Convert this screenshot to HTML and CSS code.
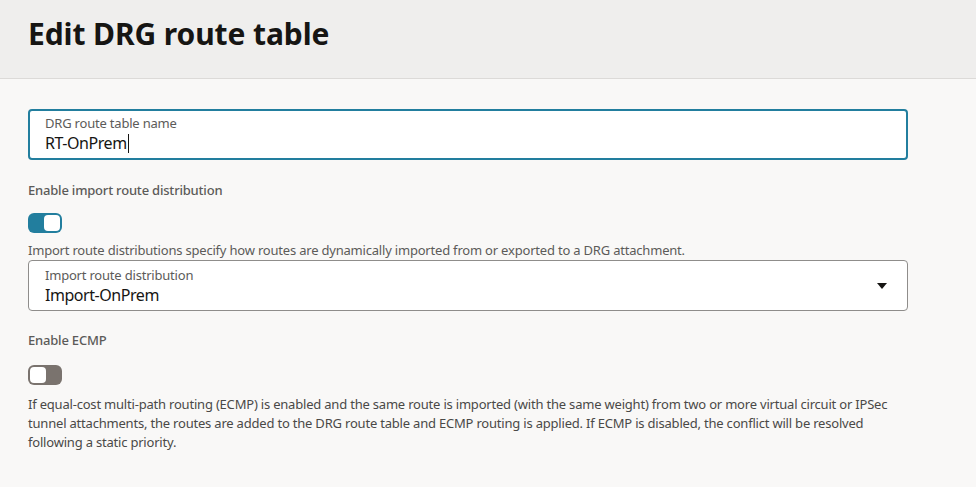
FILE: index.html
```html
<!DOCTYPE html>
<html>
<head>
<meta charset="utf-8">
<link rel="stylesheet" href="styles.css">
</head>
<body>
<header class="header">
  <h1 class="title">Edit DRG route table</h1>
</header>
<main class="content">
  <div class="field field-focus">
    <div class="field-label">DRG route table name</div>
    <div class="field-value">RT-OnPrem<span class="caret-line"></span></div>
  </div>

  <div class="section-label sl-import">Enable import route distribution</div>
  <div class="toggle toggle-on"><span class="knob"></span></div>
  <div class="help">Import route distributions specify how routes are dynamically imported from or exported to a DRG attachment.</div>

  <div class="field field-select">
    <div class="select-text">
      <div class="field-label">Import route distribution</div>
      <div class="field-value">Import-OnPrem</div>
    </div>
    <svg class="dropdown" width="10" height="6" viewBox="0 0 10 6"><path d="M0 0 H10 L5 6 Z" fill="#161513"/></svg>
  </div>

  <div class="section-label sl-ecmp">Enable ECMP</div>
  <div class="toggle toggle-off"><span class="knob"></span></div>
  <p class="desc">If equal-cost multi-path routing (ECMP) is enabled and the same route is imported (with the same weight) from two or more virtual circuit or IPSec tunnel attachments, the routes are added to the DRG route table and ECMP routing is applied. If ECMP is disabled, the conflict will be resolved following a static priority.</p>
</main>
</body>
</html>
```
FILE: styles.css
```css
* { box-sizing: border-box; }
html, body { margin: 0; padding: 0; }
body {
  background: #f9f8f7;
  font-family: "Noto Sans", "Open Sans", sans-serif;
  color: #161513;
  width: 976px;
  height: 487px;
  overflow: hidden;
}
.header {
  height: 79px;
  background: #efeeed;
  border-bottom: 1px solid #dcdad8;
  padding: 13px 0 0 28px;
}
.title {
  margin: 0;
  font-size: 30px;
  font-weight: 700;
  line-height: 42px;
  letter-spacing: -0.1px;
  color: #161513;
}
.content {
  padding: 30px 0 0 28px;
  width: 908px;
}
.field {
  height: 51px;
  background: #fff;
  border-radius: 4px;
  padding: 6px 0 0 16px;
}
.field-focus {
  border: 2px solid #227e9e;
  padding: 3px 0 0 15px;
}
.field-label {
  font-size: 13px;
  line-height: 18px;
  letter-spacing: -0.2px;
  color: #5c5b59;
}
.field-value {
  font-size: 16px;
  line-height: 22px;
  letter-spacing: -0.45px;
  color: #161513;
  display: flex;
  align-items: center;
}
.caret-line {
  display: inline-block;
  width: 1px;
  height: 19px;
  background: #161513;
  margin-left: 1px;
}
.field-select {
  border: 1px solid #8f8d8b;
  display: flex;
  align-items: center;
  justify-content: space-between;
  padding: 5px 20px 0 16px;
  height: 51px;
}
.select-text { align-self: flex-start; }
.dropdown { margin-top: -4px; }
.section-label {
  font-size: 13px;
  line-height: 18px;
  letter-spacing: -0.2px;
  color: #5c5b59;
  font-weight: 500;
}
.sl-import { margin-top: 21px; }
.sl-ecmp { margin-top: 20px; }
.toggle {
  width: 34px;
  height: 20px;
  border-radius: 6px;
  padding: 2px;
  display: flex;
}
.toggle-on { background: #227e9e; justify-content: flex-end; margin-top: 14px; }
.toggle-off { background: #7a736e; justify-content: flex-start; margin-top: 16px; }
.knob {
  width: 16px;
  height: 16px;
  background: #fff;
  border-radius: 4px;
}
.help {
  font-size: 13px;
  line-height: 18px;
  letter-spacing: -0.2px;
  color: #5c5b59;
  margin-top: 8px;
  margin-bottom: 1px;
}
.desc {
  margin: 10px 0 0;
  font-size: 13px;
  line-height: 19px;
  letter-spacing: -0.2px;
  color: #4a4947;
  width: 880px;
}
```
